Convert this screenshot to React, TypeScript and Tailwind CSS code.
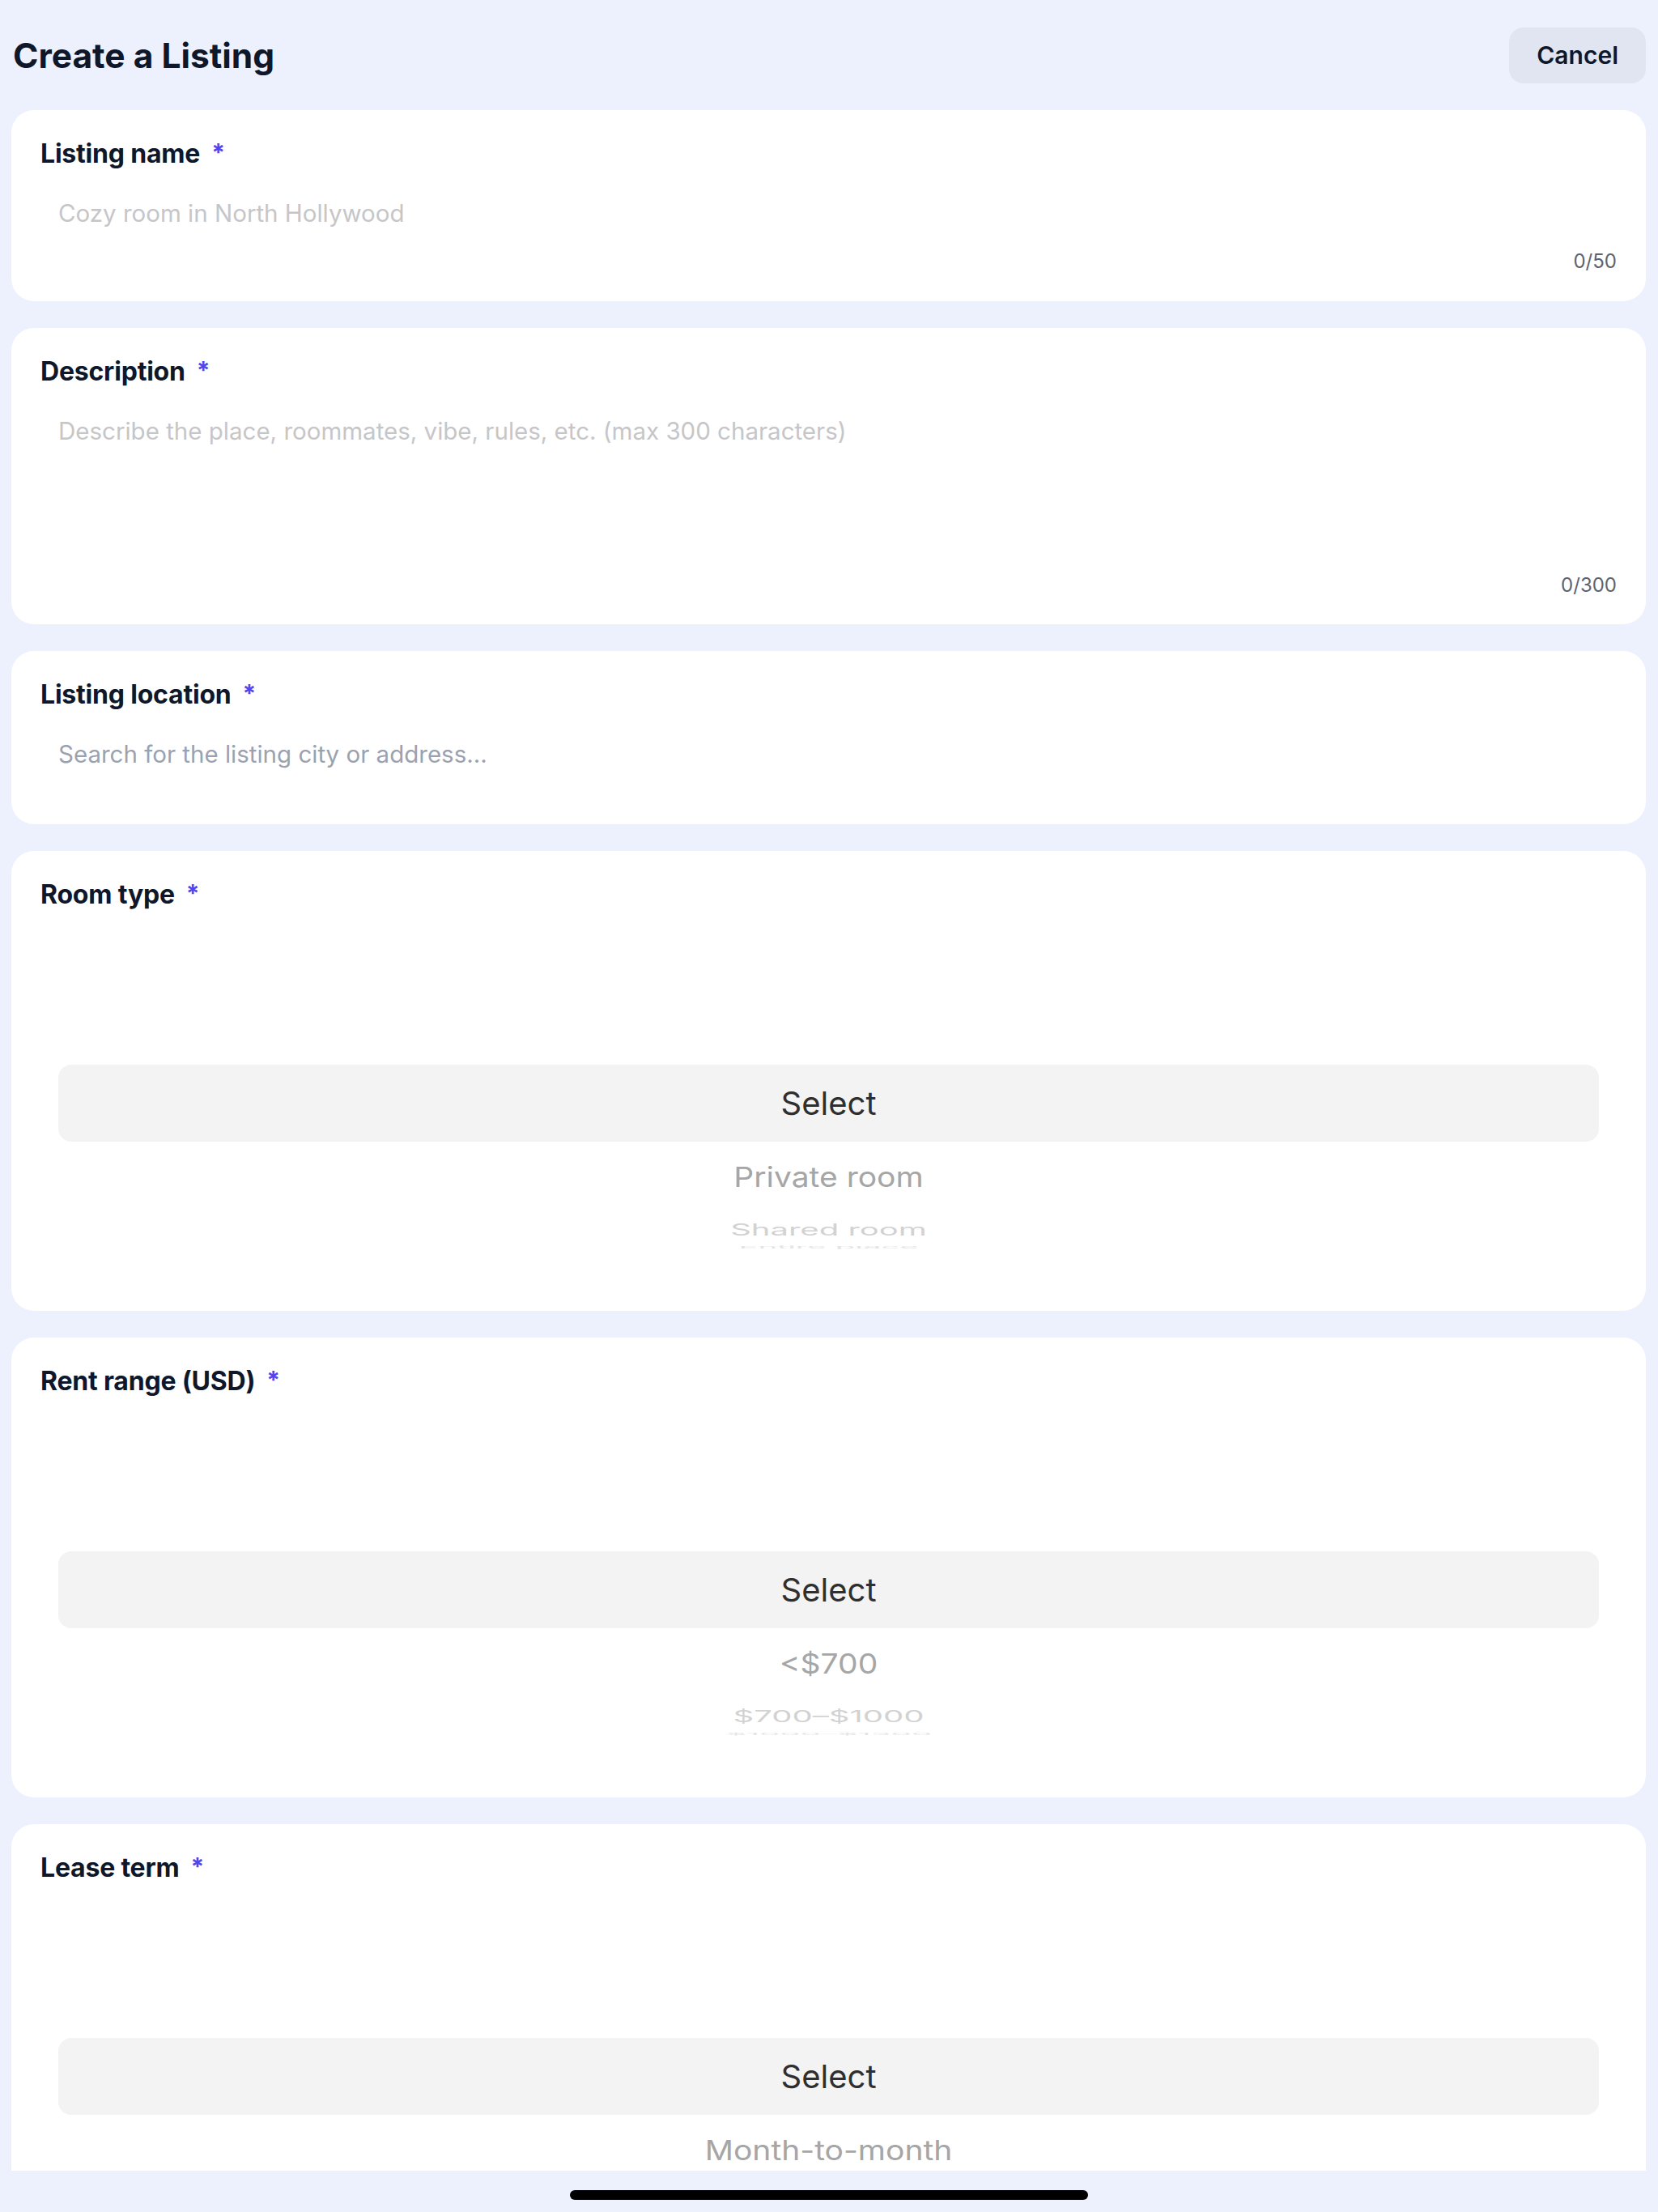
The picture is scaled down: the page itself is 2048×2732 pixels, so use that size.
import React from "react";

const PAGE_FONT = "font-['Inter','Noto_Sans',sans-serif]";

function Label({ text }: { text: string }) {
  return (
    <div className="flex items-start text-[32px] leading-[36px] font-bold tracking-[-0.2px] text-[#0f172a]">
      <span>{text}</span>
      <span className="ml-[14px] text-[30px] leading-[32px] font-bold text-[#5046ee]">*</span>
    </div>
  );
}

interface PickerProps {
  label: string;
  options: string[];
}

// iOS-style wheel: the selected row sits in the grey bar, the next rows bend away
function PickerCard({ label, options }: PickerProps) {
  return (
    <div className="h-[568px] shrink-0 rounded-[28px] bg-white px-9 pt-9">
      <Label text={label} />
      <div className="mt-[192px] flex flex-col">
        <div className="mx-[22px] flex h-[95px] items-center justify-center rounded-[16px] bg-[#f3f3f3]">
          <span className="text-[40px] leading-[48px] text-[#2f2f2f]">Select</span>
        </div>
        {options[0] && (
          <div className="flex h-[87px] items-center justify-center">
            <span className="scale-y-[0.88] text-[39px] leading-[48px] text-[#a6a6a6]">
              {options[0]}
            </span>
          </div>
        )}
        {options[1] && (
          <div className="flex h-[43px] items-center justify-center">
            <span className="scale-y-[0.5] text-[40px] leading-[48px] text-[#d2d2d2]">
              {options[1]}
            </span>
          </div>
        )}
        {options[2] && (
          <div className="flex h-[2px] items-center justify-center">
            <span className="scale-y-[0.1] text-[40px] leading-[48px] text-[#e4e4e4]">
              {options[2]}
            </span>
          </div>
        )}
      </div>
    </div>
  );
}

export default function App() {
  return (
    <div className={`${PAGE_FONT} h-[2732px] w-full bg-[#edf1fd]`}>
      <div className="h-[2681px] overflow-hidden">
        <div className="flex flex-col gap-[33px] pl-[14px] pr-[15px] pt-[34px]">
          {/* header */}
          <div className="flex h-[69px] items-center justify-between">
            <h1 className="pl-[2px] text-[42.5px] leading-[50px] font-bold text-[#0f172a]">
              Create a Listing
            </h1>
            <button className="h-[69px] rounded-[18px] bg-[#e1e5f1] px-[34px] text-[30px] font-semibold text-[#0f172a]">
              Cancel
            </button>
          </div>

          {/* listing name */}
          <div className="rounded-[28px] bg-white px-9 pt-9 pb-[34px]">
            <Label text="Listing name" />
            <input
              className="mt-[22px] block h-[66px] w-full px-[22px] text-[29.5px] leading-[34px] outline-none placeholder:text-[#c6c6c8]"
              placeholder="Cozy room in North Hollywood"
            />
            <div className="mt-3 text-right text-[24px] leading-[30px] text-[#5d6370]">0/50</div>
          </div>

          {/* description */}
          <div className="rounded-[28px] bg-white px-9 pt-9 pb-[33px]">
            <Label text="Description" />
            <textarea
              className="mt-[22px] block h-[197px] w-full resize-none px-[22px] py-4 text-[29.5px] leading-[34px] outline-none placeholder:text-[#c6c6c8]"
              placeholder="Describe the place, roommates, vibe, rules, etc. (max 300 characters)"
            />
            <div className="mt-3 text-right text-[24px] leading-[30px] text-[#5d6370]">0/300</div>
          </div>

          {/* location */}
          <div className="rounded-[28px] bg-white px-9 pt-9 pb-[54px]">
            <Label text="Listing location" />
            <input
              className="mt-[22px] block h-[66px] w-full px-[22px] text-[29.5px] leading-[34px] outline-none placeholder:text-[#9ba2af]"
              placeholder="Search for the listing city or address..."
            />
          </div>

          <PickerCard label="Room type" options={["Private room", "Shared room", "Entire place"]} />
          <PickerCard label="Rent range (USD)" options={["<$700", "$700–$1000", "$1000–$1300"]} />
          {/* rows past the first one are clipped by the scroll edge */}
          <PickerCard label="Lease term" options={["Month-to-month"]} />
        </div>
      </div>
      <div className="flex justify-center pt-[24px]">
        <div className="h-[12px] w-[640px] rounded-full bg-black" />
      </div>
    </div>
  );
}
